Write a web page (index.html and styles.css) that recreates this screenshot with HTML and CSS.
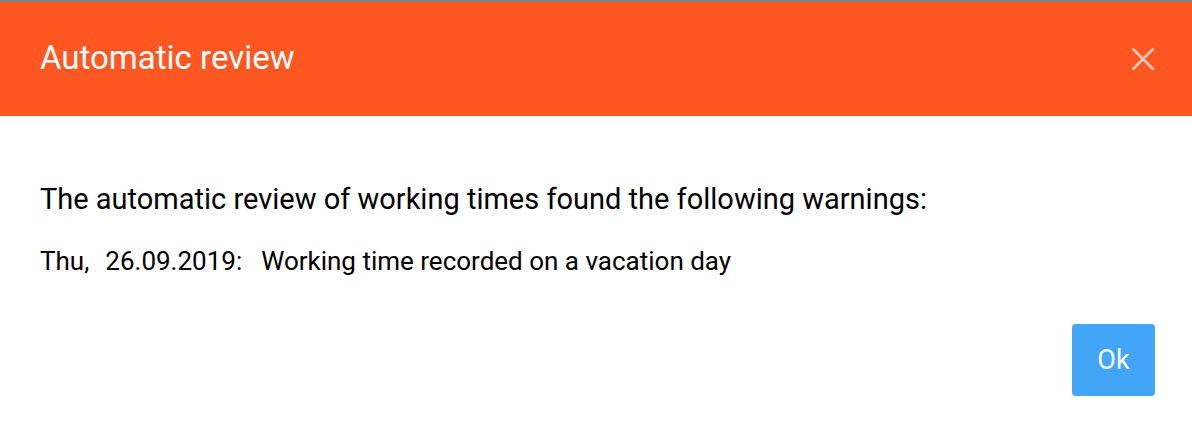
FILE: index.html
```html
<!DOCTYPE html>
<html lang="en">
<head>
<meta charset="utf-8">
<title>Automatic review</title>
<link rel="stylesheet" href="styles.css">
</head>
<body>
<div class="dialog">
  <header class="dialog-header">
    <h1 class="dialog-title">Automatic review</h1>
    <button class="close-btn" aria-label="Close">
      <svg width="24" height="24" viewBox="0 0 24 24"><path d="M1.5 1.5 L22.5 22.5 M22.5 1.5 L1.5 22.5" stroke="currentColor" stroke-width="2.6" fill="none"/></svg>
    </button>
  </header>
  <div class="dialog-body">
    <p class="intro">The automatic review of working times found the following warnings:</p>
    <p class="warning"><span class="day">Thu,</span><span class="date">26.09.2019:</span><span class="msg">Working time recorded on a vacation day</span></p>
  </div>
  <div class="dialog-actions">
    <button class="ok-btn">Ok</button>
  </div>
</div>
</body>
</html>
```
FILE: styles.css
```css
html, body {
  margin: 0;
  padding: 0;
  background: #ffffff;
}
body {
  font-family: Roboto, "Liberation Sans", sans-serif;
  color: #000;
}
.dialog {
  width: 1192px;
  height: 434px;
  border-top: 2px solid #7f837f;
  box-sizing: border-box;
  display: flex;
  flex-direction: column;
}
.dialog-header {
  background: #ff5722;
  height: 114px;
  display: flex;
  align-items: center;
  justify-content: space-between;
  padding: 0 37px 4px 40px;
  box-sizing: border-box;
}
.dialog-title {
  margin: 0;
  font-size: 33px;
  font-weight: 400;
  color: #fff;
}
.close-btn {
  background: none;
  border: 0;
  padding: 0;
  width: 24px;
  height: 24px;
  margin-top: 4px;
  color: rgba(255, 255, 255, 0.68);
  display: flex;
}
.dialog-body {
  padding: 66px 40px 0 40px;
}
.intro {
  margin: 0;
  font-size: 29px;
  line-height: 34px;
}
.warning {
  margin: 30px 0 0 0;
  font-size: 26px;
  line-height: 30px;
  display: flex;
}
.day { margin-right: 16px; }
.date { margin-right: 19px; }
.dialog-actions {
  display: flex;
  justify-content: flex-end;
  padding: 48px 37px 0 0;
}
.ok-btn {
  background: #42a5f5;
  color: #fff;
  border: 0;
  border-radius: 4px;
  width: 83px;
  height: 72px;
  font-family: Roboto, "Liberation Sans", sans-serif;
  font-size: 27px;
}
```
